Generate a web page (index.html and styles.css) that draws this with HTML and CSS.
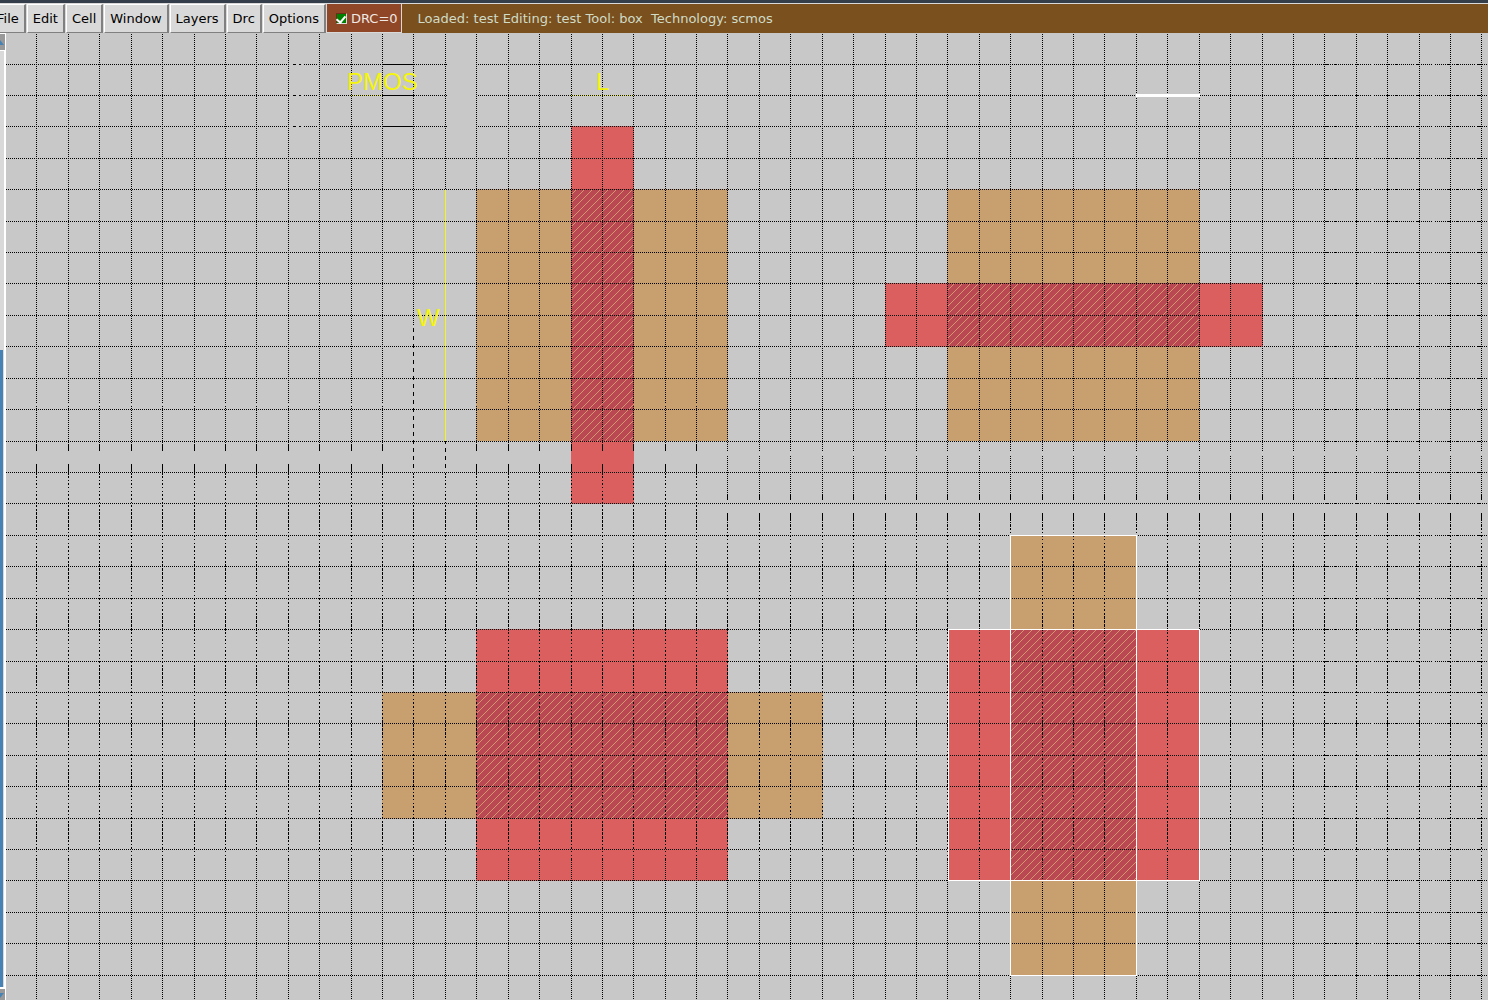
FILE: index.html
```html
<!DOCTYPE html>
<html lang="en">
<head>
<meta charset="utf-8">
<title>Layout editor - test</title>
<link rel="stylesheet" href="styles.css">
</head>
<body>
<header class="toolbar">
  <nav class="menus">
    <button class="menu">File</button>
    <button class="menu">Edit</button>
    <button class="menu">Cell</button>
    <button class="menu">Window</button>
    <button class="menu">Layers</button>
    <button class="menu">Drc</button>
    <button class="menu">Options</button>
  </nav>
  <label class="drc"><input class="drc-box" type="checkbox" checked>DRC=0</label>
  <p class="status">Loaded: test Editing: test Tool: box&nbsp; Technology: scmos</p>
</header>
<main class="workspace">
  <div class="scrollbar">
    <button class="arrow" aria-label="Scroll up"><svg width="5" height="12"><path d="M0 4L4 9H0z"/></svg></button>
    <div class="track"><div class="thumb"></div></div>
    <button class="arrow" aria-label="Scroll down"><svg width="5" height="12"><path d="M0 9L4 4H0z"/></svg></button>
  </div>
  <svg class="canvas" role="img" aria-label="Transistor layout">
    <defs>
      <pattern id="dots-v" width="1" height="2" patternUnits="userSpaceOnUse"><rect width="1" height="1"/></pattern>
      <pattern id="dots-h" width="2" height="1" patternUnits="userSpaceOnUse"><rect width="1" height="1"/></pattern>
      <pattern id="dash-v" width="1" height="52" patternUnits="userSpaceOnUse"><path d="M0 0h1v3h-1zM0 4h1v3h-1zM0 8h1v2h-1zM0 12h1v1h-1zM0 15h1v2h-1zM0 19h1v1h-1zM0 23h1v1h-1zM0 26h1v2h-1zM0 30h1v2h-1zM0 34h1v1h-1zM0 37h1v2h-1zM0 41h1v2h-1zM0 44h1v3h-1zM0 48h1v3h-1z"/></pattern>
      <pattern id="dash-long" width="1" height="8" patternUnits="userSpaceOnUse"><rect width="1" height="4"/></pattern>
      <pattern id="dash-h" width="61" height="1" patternUnits="userSpaceOnUse"><path d="M0 0h1v1h-1zM2 0h1v1h-1zM4 0h1v1h-1zM6 0h1v1h-1zM8 0h1v1h-1zM10 0h1v1h-1zM13 0h4v1h-4zM18 0h1v1h-1zM20 0h1v1h-1zM22 0h1v1h-1zM24 0h1v1h-1zM26 0h1v1h-1zM28 0h1v1h-1zM32 0h1v1h-1zM34 0h1v1h-1zM36 0h1v1h-1zM38 0h1v1h-1zM40 0h1v1h-1zM42 0h1v1h-1zM44 0h4v1h-4zM49 0h1v1h-1zM51 0h1v1h-1zM53 0h3v1h-3zM57 0h1v1h-1zM59 0h1v1h-1z"/></pattern>
      <pattern id="hatch" width="8" height="8" patternUnits="userSpaceOnUse">
        <path class="hatch-line" d="M5 0h1v1h-1zM4 1h1v1h-1zM3 2h1v1h-1zM2 3h1v1h-1zM1 4h1v1h-1zM0 5h1v1h-1zM7 6h1v1h-1zM6 7h1v1h-1z"/>
      </pattern>
    </defs>
    <g transform="translate(-6 -33)">
      <g class="diffusion">
        <rect x="476" y="189" width="252" height="252"/>
        <rect x="947" y="189" width="253" height="252"/>
        <rect x="382" y="692" width="441" height="127"/>
        <rect x="1010" y="535" width="127" height="441"/>
      </g>
      <g class="poly">
        <rect x="571" y="126" width="63" height="378"/>
        <rect x="885" y="283" width="378" height="64"/>
        <rect x="476" y="629" width="252" height="252"/>
        <rect x="948" y="629" width="252" height="252"/>
      </g>
      <g class="gate">
        <rect x="571" y="189" width="63" height="252"/>
        <rect x="947" y="283" width="253" height="64"/>
        <rect x="476" y="692" width="252" height="127"/>
        <rect x="1010" y="629" width="127" height="252"/>
      </g>
      <g fill="url(#hatch)">
        <rect x="571" y="189" width="63" height="252"/>
        <rect x="947" y="283" width="253" height="64"/>
        <rect x="476" y="692" width="252" height="127"/>
        <rect x="1010" y="629" width="127" height="252"/>
      </g>
      <g class="rulers">
        <rect x="445" y="190" width="1" height="251"/>
        <rect x="351" y="95" width="32" height="1"/>
        <rect x="571" y="95" width="63" height="1"/>
      </g>
      <g id="grid"></g>
      <g class="selection">
        <path d="M1010 535h127v1h-127zM1010 975h127v1h-127zM1010 535h1v441h-1zM1136 535h1v441h-1z"/>
        <path d="M948 629h252v1h-252zM948 880h252v1h-252zM948 629h1v252h-1zM1199 629h1v252h-1z"/>
        <rect x="1136" y="94" width="64" height="3"/>
      </g>
      <g class="labels">
        <text x="347" y="90">PMOS</text>
        <text x="596" y="90">L</text>
        <text x="417" y="326">W</text>
      </g>
    </g>
  </svg>
</main>
<script src="grid.js"></script>
</body>
</html>
```
FILE: styles.css
```css
* {
  box-sizing: border-box;
}

body {
  margin: 0;
  height: 100vh;
  display: flex;
  flex-direction: column;
  overflow: hidden;
  background: #c8c8c8;
  font: 13px/18px "DejaVu Sans", sans-serif;
}

.toolbar {
  display: flex;
  flex: none;
  height: 33px;
  border-top: 3px solid #343d4a;
  background: #7a501e;
  box-shadow: inset 0 1px #d9d9d9;
}

.menus {
  display: flex;
  gap: 1px;
  margin-left: -9px;
  padding-top: 1px;
  background: #d9d9d9;
}

.menu {
  padding: 1px 5px 0;
  border: 1px solid;
  border-color: #fff #808080 #808080 #fff;
  border-right-width: 2px;
  background: #d9d9d9;
  color: #000;
  font: inherit;
  white-space: nowrap;
}

.drc {
  display: flex;
  align-items: center;
  gap: 4px;
  margin-top: 1px;
  padding: 1px 3px 0 9px;
  border: 1px solid #d9d9d9;
  border-top: 0;
  background: #8f4727;
  color: #f0e8e4;
}

.drc-box {
  appearance: none;
  width: 11px;
  height: 11px;
  margin: 0;
  border: 1px solid;
  border-color: #6b3018 #d9d9d9 #d9d9d9 #6b3018;
  background: #008000;
  display: grid;
  place-items: center;
}

.drc-box:checked::after {
  content: "";
  width: 4px;
  height: 7px;
  margin-bottom: 2px;
  border: solid #fff;
  border-width: 0 2px 2px 0;
  transform: rotate(40deg);
}

.status {
  align-self: center;
  margin: 0;
  padding: 2px 0 0 16px;
  color: #d0dcc8;
  white-space: nowrap;
}

.workspace {
  display: flex;
  flex: 1;
  min-height: 0;
}

.scrollbar {
  display: flex;
  flex-direction: column;
  width: 6px;
  background: #d9d9d9;
}

.arrow {
  flex: none;
  height: 17px;
  padding: 0;
  border: solid #fff;
  border-width: 1px 1px 0 0;
  background: #999;
  overflow: hidden;
}

.arrow svg {
  display: block;
  fill: #4682b4;
}

.arrow:last-child {
  height: 12px;
}

.track {
  flex: 1;
  padding-top: 299px;
  border: solid #fff;
  border-width: 1px 2px 1px 0;
  background: #d9d9d9;
}

.thumb {
  width: 3px;
  height: 100%;
  background: #4682b4;
}

.canvas {
  flex: 1;
  min-width: 0;
  height: 100%;
  background: #c8c8c8;
  shape-rendering: crispEdges;
}

.diffusion {
  fill: #c8a070;
}

.poly {
  fill: #dc5f5f;
}

.gate {
  fill: #b94853;
}

.hatch-line {
  fill: #d4966f;
}

.rulers {
  fill: #f5f514;
}

.selection {
  fill: #fff;
}

.labels {
  fill: #f5f50a;
  font: 24px "Liberation Sans", sans-serif;
}
```
FILE: grid.js
```js
// Draws the dotted lambda grid over the whole canvas.
const grid = document.getElementById("grid");
const canvas = document.querySelector(".canvas");
const right = canvas.clientWidth + 6;
const bottom = canvas.clientHeight + 33;
const PITCH_X = 31.416;
const PITCH_Y = 31.42;

function run(x, y, width, height, fill) {
  if (width <= 0 || height <= 0) return;
  const rect = document.createElementNS("http://www.w3.org/2000/svg", "rect");
  rect.setAttribute("x", x);
  rect.setAttribute("y", y);
  rect.setAttribute("width", width);
  rect.setAttribute("height", height);
  rect.setAttribute("fill", fill);
  grid.append(rect);
}

function column(x, from, to, fill) {
  run(x, from, 1, to - from, fill);
}

function row(y, from, to, fill) {
  run(from, y, to - from, 1, fill);
}

for (let k = 0; ; k++) {
  const x = Math.floor((k < 18 ? 36.93 : 36.84) + k * PITCH_X);
  if (x >= right) break;
  const s = x < 712 ? 403 : 452;
  if (x === 413) {
    column(x, 34, 325, "url(#dots-v)");
    column(x, 325, s + 66, "url(#dash-long)");
  } else if (x === 445) {
    column(x, 34, 190, "url(#dots-v)");
    column(x, 441, s + 66, "url(#dash-long)");
  } else {
    column(x, 34, s, "url(#dots-v)");
    column(x, s + 3, s + 42, "url(#dots-v)");
    column(x, s + 42, s + 48, "#000");
    column(x, s + 61, s + 69, "#000");
  }
  column(x, s + 70, 860, "url(#dash-v)");
  column(x, 860, bottom, "url(#dots-v)");
}

for (let k = 0; ; k++) {
  const y = Math.floor(64.05 + k * PITCH_Y);
  if (y >= bottom) break;
  if (k < 3) {
    row(y, 6, 290, "url(#dots-h)");
    row(y, 293, 296, "#000");
    row(y, 299, 301, "#000");
    row(y, 304, 318, "url(#dots-h)");
    row(y, 322, 383, "url(#dots-h)");
    row(y, 383, 414, "#000");
    row(y, 414, 447, "url(#dots-h)");
    row(y, 478, 1314, "url(#dots-h)");
  } else {
    row(y, 6, 1314, "url(#dots-h)");
  }
  row(y, 1314, right, "url(#dash-h)");
}
```
